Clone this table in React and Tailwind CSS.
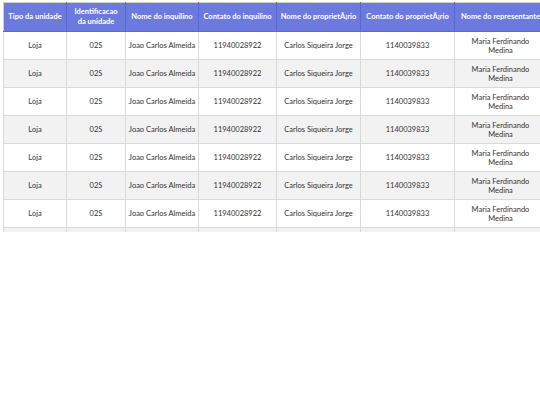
import React from 'react';

const columns = [
  { label: 'Tipo da unidade', width: 'w-[63px]' },
  { label: 'Identificacao da unidade', width: 'w-[59px]' },
  { label: 'Nome do inquilino', width: 'w-[73px]' },
  { label: 'Contato do inquilino', width: 'w-[78px]' },
  { label: 'Nome do proprietÃ¡rio', width: 'w-[84px]' },
  { label: 'Contato do proprietÃ¡rio', width: 'w-[94px]' },
  { label: 'Nome do representante', width: 'w-[92px]' },
  { label: 'Contato do representante', width: 'w-[96px]' },
];

const row = [
  'Loja',
  '02S',
  'Joao Carlos Almeida',
  '11940028922',
  'Carlos Siqueira Jorge',
  '1140039833',
  'Maria Ferdinando Medina',
  '11987654321',
];

const rows = Array.from({ length: 10 }, () => row);

const App = () => {
  return (
    <div className="min-h-screen bg-white font-['Lato',sans-serif] overflow-hidden">
      <div className="h-[232px] overflow-hidden pt-[2px] pl-[3px]">
        <table className="table-fixed border-collapse w-[639px] text-[7.5px] text-[#333]">
          <thead>
            <tr className="bg-[#6c7ae0]">
              {columns.map((col, j) => (
                <th
                  key={col.label}
                  className={`${col.width} ${j === 1 ? 'whitespace-normal' : 'whitespace-nowrap'} h-[29px] px-[2px] py-0 leading-[10px] font-bold text-white text-center border border-[#5b69cc] border-t-[#cfcfcf] first:border-l-[#cfcfcf]`}
                >
                  {j === 1 ? <div className="mx-auto max-w-[50px]">{col.label}</div> : col.label}
                </th>
              ))}
            </tr>
          </thead>
          <tbody>
            {rows.map((r, i) => (
              <tr key={i} className={i % 2 === 1 ? 'bg-[#f2f2f2]' : 'bg-white'}>
                {r.map((cell, j) => (
                  <td
                    key={j}
                    className="h-[28px] px-[2px] py-0 leading-[9px] text-center whitespace-nowrap border border-[#d9d9d9]"
                  >
                    {j === 6 ? (
                      <div className="mx-auto max-w-[66px] whitespace-normal">{cell}</div>
                    ) : (
                      cell
                    )}
                  </td>
                ))}
              </tr>
            ))}
          </tbody>
        </table>
      </div>
    </div>
  );
};

export default App;
